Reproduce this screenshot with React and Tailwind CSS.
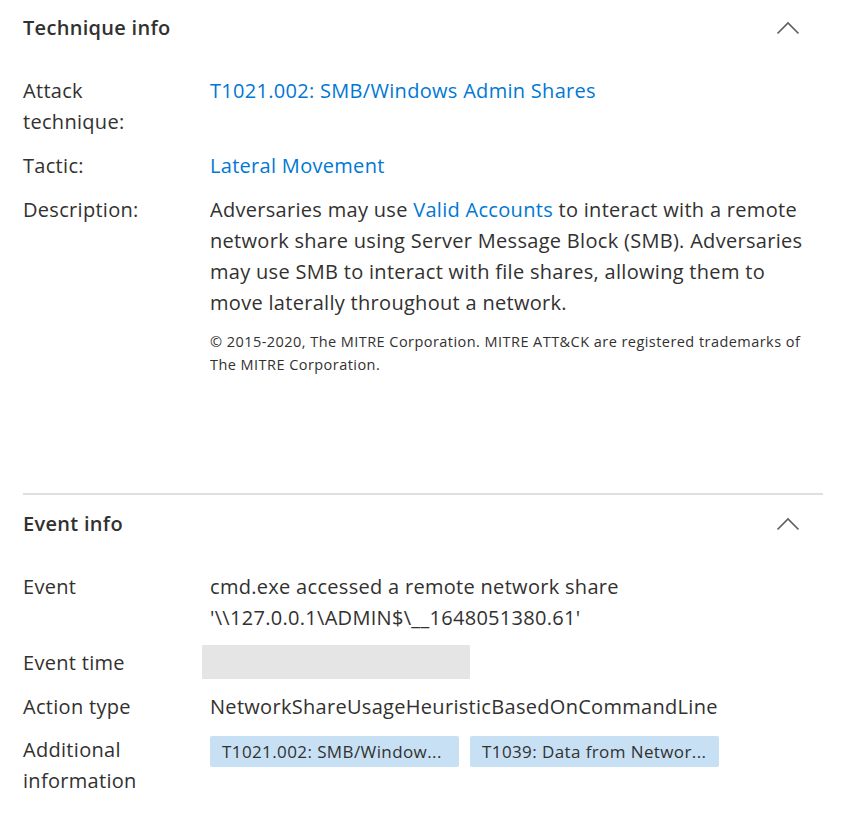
import { useState } from 'react';

const Chevron = ({ open }) => (
  <svg
    width="24"
    height="14"
    viewBox="0 0 24 14"
    className={open ? '' : 'rotate-180'}
    fill="none"
    stroke="#605e5c"
    strokeWidth="1.6"
  >
    <path d="M1.5 12.5 L12 2 L22.5 12.5" />
  </svg>
);

const Row = ({ label, children, className = '' }) => (
  <div className={`flex ${className}`}>
    <div className="w-[187px] shrink-0 pr-4 text-[#323130]">{label}</div>
    <div className="flex-1 min-w-0 text-[#323130]">{children}</div>
  </div>
);

const Link = ({ children }) => (
  <a href="#" className="text-[#0078d4] hover:underline">
    {children}
  </a>
);

const Section = ({ title, open, onToggle, children }) => (
  <section>
    <button
      onClick={onToggle}
      className="w-full flex items-center justify-between h-[31px] text-left"
    >
      <span className="font-semibold text-[#323130]">{title}</span>
      <span className="mr-[23px] flex items-center">
        <Chevron open={open} />
      </span>
    </button>
    {open && children}
  </section>
);

const Chip = ({ children }) => (
  <span className="inline-flex items-center h-[31px] w-[249px] px-[12px] bg-[#c7e0f4] rounded-[2px] text-[17px] tracking-[0.4px] text-[#323130] truncate">
    {children}
  </span>
);

export default function App() {
  const [techOpen, setTechOpen] = useState(true);
  const [eventOpen, setEventOpen] = useState(true);

  return (
    <div className="min-h-screen bg-white font-['Open_Sans',sans-serif] text-[20px] leading-[31px] tracking-[0.3px]">
      <div className="pl-[23px] pr-[20px]">
        <div className="pt-[12px] pb-[117px]">
          <Section
            title="Technique info"
            open={techOpen}
            onToggle={() => setTechOpen(!techOpen)}
          >
            <div className="mt-[32px] flex flex-col gap-[13px]">
              <Row label={<>Attack<br />technique:</>}>
                <Link>T1021.002: SMB/Windows Admin Shares</Link>
              </Row>
              <Row label="Tactic:">
                <Link>Lateral Movement</Link>
              </Row>
              <Row label="Description:">
                <p className="pr-[10px]">
                  Adversaries may use <Link>Valid Accounts</Link> to interact with a remote
                  network share using Server Message Block (SMB). Adversaries may use SMB to
                  interact with file shares, allowing them to move laterally throughout a
                  network.
                </p>
                <p className="mt-[12px] pr-[14px] text-[14.5px] leading-[23px] tracking-[0.45px]">
                  © 2015-2020, The MITRE Corporation. MITRE ATT&amp;CK are registered trademarks
                  of The MITRE Corporation.
                </p>
              </Row>
            </div>
          </Section>
        </div>

        <div className="border-t-2 border-[#e1dfdd]" />

        <div className="pt-[13px] pb-[40px]">
          <Section
            title="Event info"
            open={eventOpen}
            onToggle={() => setEventOpen(!eventOpen)}
          >
            <div className="mt-[32px] flex flex-col gap-[12px]">
              <Row label="Event">
                cmd.exe accessed a remote network share
                <br />
                '\\127.0.0.1\ADMIN$\__1648051380.61'
              </Row>
              <Row label="Event time" className="items-center">
                <div className="ml-[-8px] w-[268px] h-[34px] bg-[#e5e5e5]" />
              </Row>
              <Row label="Action type">NetworkShareUsageHeuristicBasedOnCommandLine</Row>
              <Row label={<>Additional<br />information</>}>
                <div className="flex gap-[11px] pt-[2px]">
                  <Chip>T1021.002: SMB/Window...</Chip>
                  <Chip>T1039: Data from Networ...</Chip>
                </div>
              </Row>
            </div>
          </Section>
        </div>
      </div>
    </div>
  );
}
